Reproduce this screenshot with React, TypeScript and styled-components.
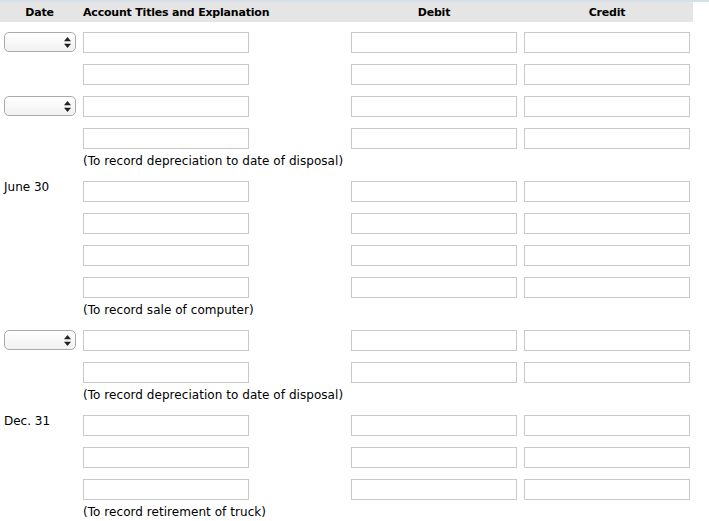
import React from "react";
import styled, { createGlobalStyle } from "styled-components";

const GlobalStyle = createGlobalStyle`
  html, body { margin: 0; padding: 0; background: #ffffff; }
  body { font-family: "DejaVu Sans", Verdana, sans-serif; font-size: 12px; color: #000; }
`;

const Page = styled.div`
  width: 709px;
  border-top: 2px solid #d6dee8;
`;

const Columns = `
  display: grid;
  grid-template-columns: 83px 268px 173px 169px;
  width: 693px;
`;

const Header = styled.div`
  ${Columns}
  height: 20px;
  background: #e5e5e5;
  align-items: start;
  font-weight: bold;
  font-size: 11px;
  letter-spacing: -0.2px;
  line-height: 22px;
`;

const HeadCell = styled.div<{ $align: "left" | "center"; $w?: number }>`
  text-align: ${(p) => p.$align};
  width: ${(p) => (p.$w ? `${p.$w}px` : "auto")};
  white-space: nowrap;
`;

const Body = styled.div`
  padding-top: 10px;
`;

const Row = styled.div<{ $tight?: boolean }>`
  ${Columns}
  align-items: start;
  margin-bottom: ${(p) => (p.$tight ? 4 : 11)}px;
`;

const DateCell = styled.div`
  padding-left: 4px;
  height: 21px;
`;

const DateLabel = styled.div`
  line-height: 15px;
  margin-top: -1px;
  white-space: nowrap;
`;

const Field = styled.input`
  box-sizing: border-box;
  width: 166px;
  height: 21px;
  border: 1px solid #c9c9c9;
  background: #fff;
  margin: 0;
  padding: 0 3px;
  font: inherit;
  outline: none;
`;

const SelectWrap = styled.div`
  position: relative;
  width: 72px;
  height: 20px;
`;

const Select = styled.select`
  appearance: none;
  -webkit-appearance: none;
  box-sizing: border-box;
  width: 72px;
  height: 20px;
  margin: 0;
  border: 1px solid #a9a9a9;
  border-radius: 5px;
  background: linear-gradient(#ffffff, #f1f1f1);
  font: inherit;
  color: #000;
  padding: 0 4px;
  outline: none;
`;

const Arrows = styled.svg`
  position: absolute;
  right: 5px;
  top: 5px;
  width: 7px;
  height: 11px;
  pointer-events: none;
`;

const Caption = styled.div`
  ${Columns}
  line-height: 17px;
  margin-bottom: 11px;
`;

const CaptionText = styled.div`
  grid-column: 2 / 5;
  white-space: nowrap;
  letter-spacing: 0.05px;
`;

const DateSelect = () => (
  <SelectWrap>
    <Select defaultValue="">
      <option value=""></option>
    </Select>
    <Arrows viewBox="0 0 7 11">
      <path d="M3.5 0 L7 4.2 L0 4.2 Z" fill="#222" />
      <path d="M3.5 11 L7 6.8 L0 6.8 Z" fill="#222" />
    </Arrows>
  </SelectWrap>
);

type Entry =
  | { kind: "row"; date?: "select" | string; tight?: boolean }
  | { kind: "caption"; text: string };

const entries: Entry[] = [
  { kind: "row", date: "select" },
  { kind: "row" },
  { kind: "row", date: "select" },
  { kind: "row", tight: true },
  { kind: "caption", text: "(To record depreciation to date of disposal)" },
  { kind: "row", date: "June 30" },
  { kind: "row" },
  { kind: "row" },
  { kind: "row", tight: true },
  { kind: "caption", text: "(To record sale of computer)" },
  { kind: "row", date: "select" },
  { kind: "row", tight: true },
  { kind: "caption", text: "(To record depreciation to date of disposal)" },
  { kind: "row", date: "Dec. 31" },
  { kind: "row" },
  { kind: "row", tight: true },
  { kind: "caption", text: "(To record retirement of truck)" },
];

export default function App() {
  return (
    <>
      <GlobalStyle />
      <Page>
        <Header>
          <HeadCell $align="center" $w={79}>Date</HeadCell>
          <HeadCell $align="left">Account Titles and Explanation</HeadCell>
          <HeadCell $align="center" $w={166}>Debit</HeadCell>
          <HeadCell $align="center" $w={166}>Credit</HeadCell>
        </Header>
        <Body>
          {entries.map((e, i) =>
            e.kind === "caption" ? (
              <Caption key={i}>
                <CaptionText>{e.text}</CaptionText>
              </Caption>
            ) : (
              <Row key={i} $tight={e.tight}>
                <DateCell>
                  {e.date === "select" ? (
                    <DateSelect />
                  ) : e.date ? (
                    <DateLabel>{e.date}</DateLabel>
                  ) : null}
                </DateCell>
                <div>
                  <Field type="text" />
                </div>
                <div>
                  <Field type="text" />
                </div>
                <div>
                  <Field type="text" />
                </div>
              </Row>
            )
          )}
        </Body>
      </Page>
    </>
  );
}
